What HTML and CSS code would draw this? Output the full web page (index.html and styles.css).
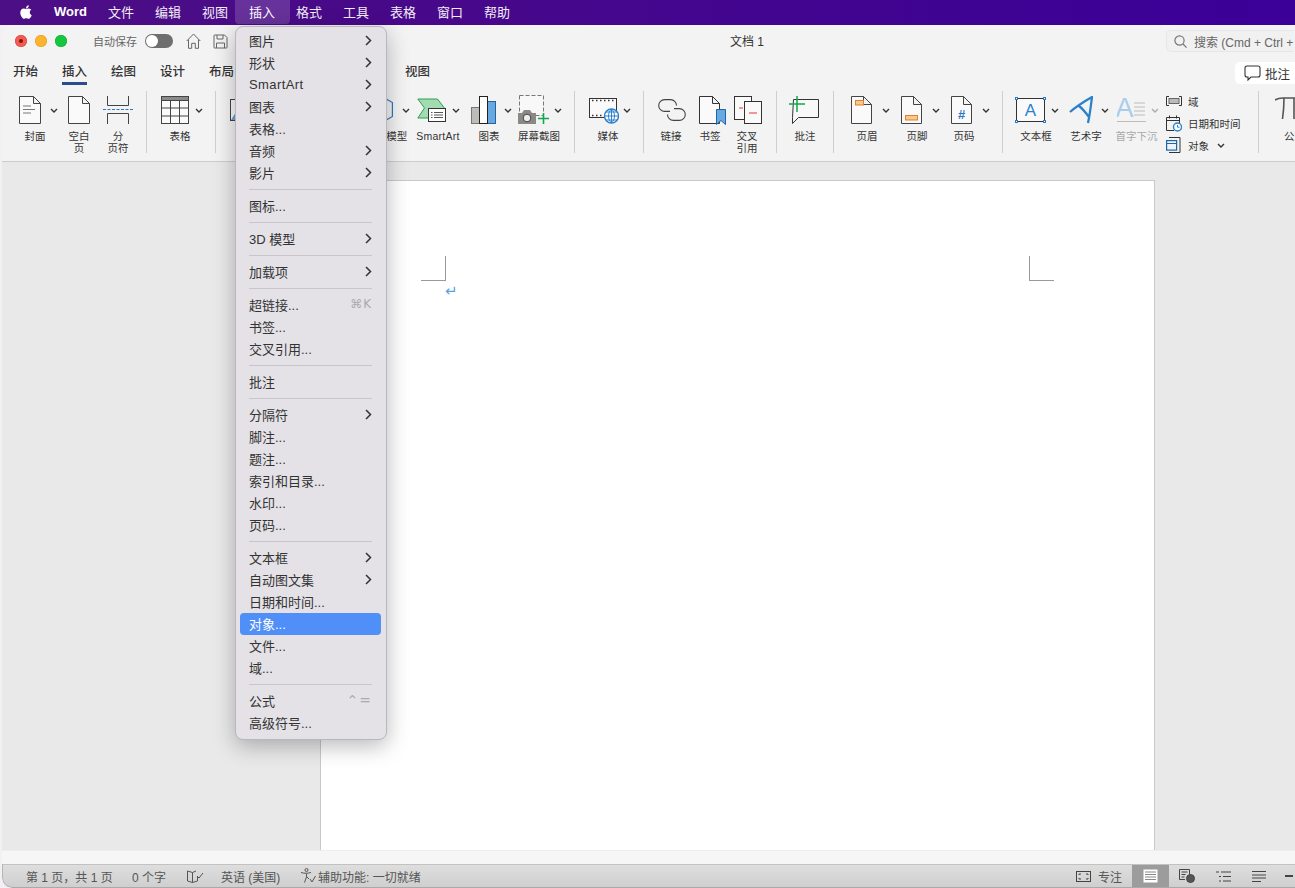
FILE: index.html
```html
<!DOCTYPE html>
<html lang="zh-CN">
<head>
<meta charset="utf-8">
<title>Word</title>
<link rel="stylesheet" href="styles.css">
</head>
<body>
<header class="menubar">
  <svg class="apple" width="18" height="18" viewBox="0 0 24 24"><path fill="#fff" d="M17.05 20.28c-.98.95-2.05.8-3.08.35-1.09-.46-2.09-.48-3.24 0-1.44.62-2.2.44-3.06-.35C2.79 15.25 3.51 7.59 9.05 7.31c1.35.07 2.29.74 3.08.8 1.18-.24 2.31-.93 3.57-.84 1.51.12 2.65.72 3.4 1.8-3.12 1.87-2.38 5.98.48 7.13-.57 1.5-1.31 2.99-2.54 4.09zM12.03 7.25c-.15-2.23 1.66-4.07 3.74-4.25.29 2.58-2.34 4.5-3.74 4.25z"/></svg>
  <span class="mb-app">Word</span>
  <span class="mb-item">文件</span>
  <span class="mb-item">编辑</span>
  <span class="mb-item">视图</span>
  <span class="mb-item mb-active">插入</span>
  <span class="mb-item">格式</span>
  <span class="mb-item">工具</span>
  <span class="mb-item">表格</span>
  <span class="mb-item">窗口</span>
  <span class="mb-item">帮助</span>
</header>

<main class="window">
  <div class="titlebar">
    <span class="light red"><i></i></span><span class="light yellow"></span><span class="light green"></span>
    <span class="autosave">自动保存</span>
    <span class="toggle"><i></i></span>
    <svg class="qa-home" width="15" height="16" viewBox="0 0 15 16" fill="none" stroke="#666" stroke-width="1"><path d="M.7 8 7.5 1l6.8 7M2.5 6.5v8.8h3.2v-5h3.6v5h3.2V6.5"/></svg>
    <svg class="qa-save" width="15" height="15" viewBox="0 0 15 15" fill="none" stroke="#666" stroke-width="1"><path d="M1 1.5a.5.5 0 0 1 .5-.5h10L14 3.5v10a.5.5 0 0 1-.5.5h-12a.5.5 0 0 1-.5-.5zM4 1v4h6V1M3.5 14V9h8v5"/></svg>
    <span class="doc-title">文档 1</span>
    <div class="search">
      <svg width="13" height="13" viewBox="0 0 13 13" fill="none" stroke="#777" stroke-width="1.2"><circle cx="5.5" cy="5.5" r="4.6"/><path d="m9 9 3.6 3.6"/></svg>
      <span>搜索 (Cmd + Ctrl +</span>
    </div>
  </div>

  <nav class="tabs">
    <span class="tab">开始</span>
    <span class="tab tab-active">插入</span>
    <span class="tab">绘图</span>
    <span class="tab">设计</span>
    <span class="tab">布局</span>
    <span class="tab tab-covered">引用</span>
    <span class="tab tab-covered">邮件</span>
    <span class="tab tab-covered">审阅</span>
    <span class="tab">视图</span>
    <button class="comment-btn">
      <svg width="17" height="16" viewBox="0 0 17 16" fill="none" stroke="#333" stroke-width="1.1"><path d="M3 1h11a2 2 0 0 1 2 2v7a2 2 0 0 1-2 2H7l-3 3v-3H3a2 2 0 0 1-2-2V3a2 2 0 0 1 2-2z"/></svg>
      <span>批注</span>
    </button>
  </nav>

  <section class="ribbon">
    <div class="tool t-cover">
      <div class="irow">
        <svg width="22" height="28" viewBox="0 0 22 28" fill="#fafafa" stroke="#444"><path d="M.5.500h14l7 7v20H.5zM14.500.5v7h7"/><path d="M4 10h8M4 13.500h12M4 17h8" stroke="#777" fill="none"/></svg>
        <svg class="chev" width="8" height="5" viewBox="0 0 8 5"><path d="m1 1 3 3 3-3" fill="none" stroke="#333" stroke-width="1.4"/></svg>
      </div>
      <div class="label">封面</div>
    </div>
    <div class="tool t-blank">
      <div class="irow"><svg width="22" height="28" viewBox="0 0 22 28" fill="#fafafa" stroke="#444"><path d="M.5.500h14l7 7v20H.5zM14.500.5v7h7"/></svg></div>
      <div class="label">空白<br>页</div>
    </div>
    <div class="tool t-break">
      <div class="irow"><svg width="30" height="28" viewBox="0 0 30 28" fill="none" stroke="#444"><path d="M4.500 0v9.500h21V0M4.500 28V17.500h21V28"/><path d="M0 13.500h30" stroke="#2a78c2" stroke-dasharray="3 1.500"/></svg></div>
      <div class="label">分<br>页符</div>
    </div>
    <span class="rsep s-a"></span>
    <div class="tool t-table">
      <div class="irow">
        <svg width="28" height="28" viewBox="0 0 28 28" fill="#fafafa" stroke="#444"><rect x=".5" y=".5" width="27" height="27"/><path d="M.5.500h27v4H.5z" fill="#8a8a8a"/><path d="M9.500 4.500v23M18.500 4.500v23M.5 12h27M.5 20h27" fill="none"/></svg>
        <svg class="chev" width="8" height="5" viewBox="0 0 8 5"><path d="m1 1 3 3 3-3" fill="none" stroke="#333" stroke-width="1.4"/></svg>
      </div>
      <div class="label">表格</div>
    </div>
    <span class="rsep s-b"></span>
    <div class="tool t-pic">
      <div class="irow"><svg width="28" height="22" viewBox="0 0 28 22"><rect x=".5" y=".5" width="27" height="21" fill="#fafafa" stroke="#444"/><path d="M1 21 9 8l7 9 4-4 7 8z" fill="#6a9fd4"/></svg></div>
      <div class="label label-covered">图片</div>
    </div>
    <div class="tool t-3d">
      <div class="irow">
        <svg width="20" height="28" viewBox="0 0 20 28" fill="none" stroke="#2a78c2" stroke-width="1.200"><path d="M8 0l11.400 6.500v14L8 27-4 20V6.500z"/></svg>
        <svg class="chev" width="8" height="5" viewBox="0 0 8 5"><path d="m1 1 3 3 3-3" fill="none" stroke="#333" stroke-width="1.4"/></svg>
      </div>
      <div class="label">3D 模型</div>
    </div>
    <div class="tool t-smart">
      <div class="irow">
        <svg width="29" height="26" viewBox="0 0 29 26"><path d="M.8 2h19.700l7.700 10-7.700 9H.8l6.700-10z" fill="#a3dcb0" stroke="#2f9e53"/><rect x="11.500" y="11.500" width="17" height="13" fill="#fff" stroke="#333"/><path d="M14 15.500h1.500M17 15.500h9M14 18h1.500M17 18h9M14 20.500h1.500M17 20.500h9" stroke="#555" fill="none"/></svg>
        <svg class="chev" width="8" height="5" viewBox="0 0 8 5"><path d="m1 1 3 3 3-3" fill="none" stroke="#333" stroke-width="1.4"/></svg>
      </div>
      <div class="label">SmartArt</div>
    </div>
    <div class="tool t-chart">
      <div class="irow">
        <svg width="25" height="28" viewBox="0 0 25 28"><rect x=".5" y="11.500" width="8" height="16" fill="#bdbcb8" stroke="#777"/><rect x="16.500" y="5.500" width="8" height="22" fill="#6aa9e0" stroke="#1f66a8"/><rect x="8.500" y=".5" width="8" height="27" fill="#fff" stroke="#222"/></svg>
        <svg class="chev" width="8" height="5" viewBox="0 0 8 5"><path d="m1 1 3 3 3-3" fill="none" stroke="#333" stroke-width="1.4"/></svg>
      </div>
      <div class="label">图表</div>
    </div>
    <div class="tool t-shot">
      <div class="irow">
        <svg width="32" height="30" viewBox="0 0 32 30"><rect x="1.500" y=".5" width="24" height="20" fill="#f8f8f8" stroke="#777" stroke-dasharray="4 2"/><path d="M0 18h4l2-3h6l2 3h4v11H0z" fill="#8b8985"/><circle cx="9" cy="23" r="3.800" fill="#eee" stroke="#444"/><path d="M25.500 18v11M20 23.500h11" stroke="#12a84b" stroke-width="1.600"/></svg>
        <svg class="chev" width="8" height="5" viewBox="0 0 8 5"><path d="m1 1 3 3 3-3" fill="none" stroke="#333" stroke-width="1.4"/></svg>
      </div>
      <div class="label">屏幕截图</div>
    </div>
    <span class="rsep s-c"></span>
    <div class="tool t-media">
      <div class="irow">
        <svg width="30" height="28" viewBox="0 0 30 28"><rect x=".5" y="2.500" width="27" height="19" fill="#fafafa" stroke="#333"/><path d="M3 4.500h22M3 19.500h12" stroke="#333" stroke-width="1.600" stroke-dasharray="1.500 2.500" fill="none"/><circle cx="22.500" cy="20" r="7" fill="#fff" stroke="#2a82cc" stroke-width="1.400"/><path d="M15.500 20h14M22.500 13v14M17 16h11M17 24h11M22.500 13c-4 4-4 10 0 14M22.500 13c4 4 4 10 0 14" fill="none" stroke="#2a82cc"/></svg>
        <svg class="chev" width="8" height="5" viewBox="0 0 8 5"><path d="m1 1 3 3 3-3" fill="none" stroke="#333" stroke-width="1.4"/></svg>
      </div>
      <div class="label">媒体</div>
    </div>
    <span class="rsep s-d"></span>
    <div class="tool t-link">
      <div class="irow"><svg width="28" height="22" viewBox="0 0 28 22" fill="none" stroke="#444" stroke-width="1.100"><path d="M12 12.400H6.600a5.900 5.900 0 0 1 0-11.800h6a5.900 5.900 0 0 1 5.900 5.900M16 9.600h5.400a5.900 5.900 0 0 1 0 11.800h-6a5.900 5.900 0 0 1-5.900-5.900"/></svg></div>
      <div class="label">链接</div>
    </div>
    <div class="tool t-mark">
      <div class="irow"><svg width="27" height="29" viewBox="0 0 27 29"><path d="M.5.500h13l7 7v20H.5zM13.500.5v7h7" fill="#fafafa" stroke="#333"/><path d="M17.500 13.500h9v15l-4.500-4-4.500 4z" fill="#6aa9e0" stroke="#1f66a8"/></svg></div>
      <div class="label">书签</div>
    </div>
    <div class="tool t-cross">
      <div class="irow"><svg width="28" height="28" viewBox="0 0 28 28"><rect x=".5" y=".5" width="17" height="23" fill="#fafafa" stroke="#333"/><path d="M5 12h4" stroke="#e33"/><rect x="10.500" y="5.500" width="17" height="22" fill="#fafafa" stroke="#333"/><path d="M15 17h8" stroke="#e33"/></svg></div>
      <div class="label">交叉<br>引用</div>
    </div>
    <span class="rsep s-e"></span>
    <div class="tool t-note">
      <div class="irow"><svg width="30" height="28" viewBox="0 0 30 28"><path d="M4.500 3.500h25v18h-20l-6 6v-6h0z" fill="#f8f8f8" stroke="#333"/><path d="M8 0v16M0 8h16" stroke="#12a84b" stroke-width="1.500"/></svg></div>
      <div class="label">批注</div>
    </div>
    <span class="rsep s-f"></span>
    <div class="tool t-head">
      <div class="irow">
        <svg width="21" height="28" viewBox="0 0 21 28"><path d="M.5.500h12l8 8v19H.5z M12.500.5v8h8" fill="#fafafa" stroke="#444"/><rect x="4.500" y="4.500" width="8" height="4.500" fill="#f7c98a" stroke="#e07f2e"/></svg>
        <svg class="chev" width="8" height="5" viewBox="0 0 8 5"><path d="m1 1 3 3 3-3" fill="none" stroke="#333" stroke-width="1.4"/></svg>
      </div>
      <div class="label">页眉</div>
    </div>
    <div class="tool t-foot">
      <div class="irow">
        <svg width="21" height="28" viewBox="0 0 21 28"><path d="M.5.500h12l8 8v19H.5z M12.500.5v8h8" fill="#fafafa" stroke="#444"/><rect x="4.500" y="19.500" width="12" height="4.500" fill="#f7c98a" stroke="#e07f2e"/></svg>
        <svg class="chev" width="8" height="5" viewBox="0 0 8 5"><path d="m1 1 3 3 3-3" fill="none" stroke="#333" stroke-width="1.4"/></svg>
      </div>
      <div class="label">页脚</div>
    </div>
    <div class="tool t-num">
      <div class="irow">
        <svg width="21" height="28" viewBox="0 0 21 28"><path d="M.5.500h12l8 8v19H.5z M12.500.5v8h8" fill="#fafafa" stroke="#444"/><text x="10.500" y="23" text-anchor="middle" class="svg-hash">#</text></svg>
        <svg class="chev" width="8" height="5" viewBox="0 0 8 5"><path d="m1 1 3 3 3-3" fill="none" stroke="#333" stroke-width="1.4"/></svg>
      </div>
      <div class="label">页码</div>
    </div>
    <span class="rsep s-g"></span>
    <div class="tool t-box">
      <div class="irow">
        <svg width="31" height="26" viewBox="0 0 31 26"><rect x="1.500" y="1.500" width="28" height="23" fill="#fafafa" stroke="#333"/><text x="15.500" y="19" text-anchor="middle" class="svg-a">A</text><g fill="#fff" stroke="#2a78c2"><rect x=".5" y=".5" width="2" height="2"/><rect x="28.500" y=".5" width="2" height="2"/><rect x=".5" y="23.500" width="2" height="2"/><rect x="28.500" y="23.500" width="2" height="2"/></g></svg>
        <svg class="chev" width="8" height="5" viewBox="0 0 8 5"><path d="m1 1 3 3 3-3" fill="none" stroke="#333" stroke-width="1.4"/></svg>
      </div>
      <div class="label">文本框</div>
    </div>
    <div class="tool t-art">
      <div class="irow">
        <svg width="24" height="28" viewBox="0 0 24 28" fill="none" stroke="#2a82cc" stroke-width="2.300"><path d="M1 16C9 9 16 5 23 1c-1 8-2 17-4 26M10 10c4 3 7 7 10 11"/></svg>
        <svg class="chev" width="8" height="5" viewBox="0 0 8 5"><path d="m1 1 3 3 3-3" fill="none" stroke="#333" stroke-width="1.4"/></svg>
      </div>
      <div class="label">艺术字</div>
    </div>
    <div class="tool t-drop">
      <div class="irow">
        <svg width="29" height="26" viewBox="0 0 29 26"><text x="7.500" y="20" text-anchor="middle" class="svg-drop">A</text><path d="M17 6h11M17 10h11M17 14h11M17 18h11M0 24.500h29" stroke="#bbb" fill="none"/></svg>
        <svg class="chev" width="8" height="5" viewBox="0 0 8 5"><path d="m1 1 3 3 3-3" fill="none" stroke="#aaa" stroke-width="1.4"/></svg>
      </div>
      <div class="label label-off">首字下沉</div>
    </div>
    <div class="stack">
      <div class="srow"><svg width="16" height="10" viewBox="0 0 16 10"><path d="M3 .5H.5v9H3M13 .5h2.500v9H13" fill="none" stroke="#333"/><rect x="3" y="2.500" width="10" height="5" fill="#bbb" stroke="#666"/></svg><span>域</span></div>
      <div class="srow"><svg width="16" height="17" viewBox="0 0 16 17"><path d="M.5 2.500h13v7M8 15.500H.5v-13M.5 5.500h13M3.500.5v3M10.500.5v3" fill="none" stroke="#333"/><circle cx="11.500" cy="12" r="4" fill="#fff" stroke="#2a82cc" stroke-width="1.400"/><path d="M11.500 10v2.200h2" fill="none" stroke="#2a82cc"/></svg><span>日期和时间</span></div>
      <div class="srow"><svg width="16" height="16" viewBox="0 0 16 16"><path d="M3 .5h11v15H3" fill="none" stroke="#333"/><rect x=".6" y="3.600" width="10" height="9.500" fill="#eef4fb" stroke="#1f66a8" stroke-width="1.200"/><path d="M1 6.500h9" stroke="#1f66a8"/></svg><span>对象</span><svg class="chev-s" width="8" height="5" viewBox="0 0 8 5"><path d="m1 1 3 3 3-3" fill="none" stroke="#333" stroke-width="1.4"/></svg></div>
    </div>
    <span class="rsep s-h"></span>
    <div class="tool t-eq">
      <div class="irow"><svg width="30" height="28" viewBox="0 0 30 28" fill="none" stroke="#555" stroke-width="1.600"><path d="M0 4c3-2 5-2 8-2h22M9 2c0 8-.5 14-1.500 21M19 2v21"/></svg></div>
      <div class="label">公式</div>
    </div>
  </section>

  <section class="canvas">
    <div class="page">
      <div class="marks"><span class="mark mark-l"></span><span class="mark mark-r"></span></div>
      <div class="para">↵</div>
    </div>
  </section>
  <div class="hscroll"></div>

  <footer class="status">
    <span class="st-pages">第 1 页，共 1 页</span>
    <span class="st-words">0 个字</span>
    <svg class="st-proof" width="17" height="13" viewBox="0 0 17 13" fill="none" stroke="#555"><path d="M5.500 2.500 .5 1v10l5 1.500 5-1.500V6M5.500 2.500v10M5.500 2.500 9 1M10 6l2 2 4-5"/></svg>
    <span class="st-lang">英语 (美国)</span>
    <svg class="st-acc" width="16" height="16" viewBox="0 0 16 16" fill="none" stroke="#555"><circle cx="6.500" cy="2" r="1.500"/><path d="M1 4.500c3 1 7 1 10 0M6.500 6v3l-2 5.500M7 9l2 2M10 11l2 3 3.500-6"/></svg>
    <span class="st-acctext">辅助功能: 一切就绪</span>
    <div class="st-right">
      <svg width="15" height="11" viewBox="0 0 15 11" fill="none" stroke="#444"><rect x=".5" y=".5" width="14" height="10"/><path d="M3 4V3h2M10 3h2v1M3 7v1h2M10 8h2V7"/></svg>
      <span class="st-focus">专注</span>
      <span class="view view-on"><svg width="15" height="14" viewBox="0 0 15 14"><rect x=".5" y=".5" width="14" height="13" fill="#fff"/><path d="M2 3h11M2 5.500h11M2 8h11M2 10.500h11" stroke="#888"/></svg></span>
      <span class="view"><svg width="16" height="14" viewBox="0 0 16 14" fill="none" stroke="#444"><path d="M6 10.500H.5V.5h10v5M2.500 3h6M2.500 5.500h4M2.500 8h3"/><circle cx="11.500" cy="9.500" r="4" fill="#555"/></svg></span>
      <span class="view"><svg width="15" height="11" viewBox="0 0 15 11" fill="none" stroke="#444"><path d="M0 1h3M5 1h10M3 5.500h2M7 5.500h8M3 10h2M7 10h8"/></svg></span>
      <span class="view"><svg width="14" height="11" viewBox="0 0 14 11" fill="none" stroke="#444"><path d="M0 .5h14M0 4h14M0 7h14M0 10.500h9"/></svg></span>
      <span class="zoom-minus"></span>
    </div>
  </footer>
</main>

<div class="menu">
  <div class="mi">图片<svg class="sub" width="7" height="11" viewBox="0 0 7 11"><path d="m1 1 4.500 4.500L1 10" fill="none" stroke="#333" stroke-width="1.500"/></svg></div>
  <div class="mi">形状<svg class="sub" width="7" height="11" viewBox="0 0 7 11"><path d="m1 1 4.500 4.500L1 10" fill="none" stroke="#333" stroke-width="1.500"/></svg></div>
  <div class="mi"><span class="latin">SmartArt</span><svg class="sub" width="7" height="11" viewBox="0 0 7 11"><path d="m1 1 4.500 4.500L1 10" fill="none" stroke="#333" stroke-width="1.500"/></svg></div>
  <div class="mi">图表<svg class="sub" width="7" height="11" viewBox="0 0 7 11"><path d="m1 1 4.500 4.500L1 10" fill="none" stroke="#333" stroke-width="1.500"/></svg></div>
  <div class="mi">表格...</div>
  <div class="mi">音频<svg class="sub" width="7" height="11" viewBox="0 0 7 11"><path d="m1 1 4.500 4.500L1 10" fill="none" stroke="#333" stroke-width="1.500"/></svg></div>
  <div class="mi">影片<svg class="sub" width="7" height="11" viewBox="0 0 7 11"><path d="m1 1 4.500 4.500L1 10" fill="none" stroke="#333" stroke-width="1.500"/></svg></div>
  <div class="msep"></div>
  <div class="mi">图标...</div>
  <div class="msep"></div>
  <div class="mi">3D 模型<svg class="sub" width="7" height="11" viewBox="0 0 7 11"><path d="m1 1 4.500 4.500L1 10" fill="none" stroke="#333" stroke-width="1.500"/></svg></div>
  <div class="msep"></div>
  <div class="mi">加载项<svg class="sub" width="7" height="11" viewBox="0 0 7 11"><path d="m1 1 4.500 4.500L1 10" fill="none" stroke="#333" stroke-width="1.500"/></svg></div>
  <div class="msep"></div>
  <div class="mi">超链接...<span class="key">⌘K</span></div>
  <div class="mi">书签...</div>
  <div class="mi">交叉引用...</div>
  <div class="msep"></div>
  <div class="mi">批注</div>
  <div class="msep"></div>
  <div class="mi">分隔符<svg class="sub" width="7" height="11" viewBox="0 0 7 11"><path d="m1 1 4.500 4.500L1 10" fill="none" stroke="#333" stroke-width="1.500"/></svg></div>
  <div class="mi">脚注...</div>
  <div class="mi">题注...</div>
  <div class="mi">索引和目录...</div>
  <div class="mi">水印...</div>
  <div class="mi">页码...</div>
  <div class="msep"></div>
  <div class="mi">文本框<svg class="sub" width="7" height="11" viewBox="0 0 7 11"><path d="m1 1 4.500 4.500L1 10" fill="none" stroke="#333" stroke-width="1.500"/></svg></div>
  <div class="mi">自动图文集<svg class="sub" width="7" height="11" viewBox="0 0 7 11"><path d="m1 1 4.500 4.500L1 10" fill="none" stroke="#333" stroke-width="1.500"/></svg></div>
  <div class="mi">日期和时间...</div>
  <div class="mi mi-on">对象...</div>
  <div class="mi">文件...</div>
  <div class="mi">域...</div>
  <div class="msep"></div>
  <div class="mi">公式<span class="key key-eq">⌃=</span></div>
  <div class="mi">高级符号...</div>
</div>
</body>
</html>
```

FILE: styles.css
```css
* { box-sizing: border-box; }
html, body { margin: 0; padding: 0; }
body {
  width: 1295px;
  height: 888px;
  overflow: hidden;
  position: relative;
  display: flex;
  flex-direction: column;
  background: #f2f0f4;
  color: #333;
  font-family: "Liberation Sans", "Noto Sans CJK SC", sans-serif;
}

/* menu bar */
.menubar {
  flex: none;
  height: 25px;
  display: flex;
  align-items: center;
  padding-bottom: 3px;
  background: linear-gradient(90deg, #4d0f85 0%, #47088a 35%, #3a0098 100%);
  color: #fff;
  font-size: 13px;
}
.apple { margin-left: 17px; margin-top: 1px; flex: none; }
.mb-app { margin-left: 19px; width: 33px; font-weight: 700; }
.mb-item { margin-left: 21px; width: 26px; white-space: nowrap; opacity: .93; }
.mb-active {
  position: relative;
  opacity: 1;
}
.mb-active::before {
  content: "";
  position: absolute;
  left: -14px;
  right: -15px;
  top: -2px;
  height: 24px;
  background: rgba(255, 255, 255, .16);
  border-radius: 0 0 4px 4px;
}

/* window */
.window {
  flex: 1;
  min-height: 0;
  margin-left: 2px;
  width: 1293px;
  display: flex;
  flex-direction: column;
  background: #f3f3f3;
  border-radius: 10px 0 0 10px;
  overflow: hidden;
}
.titlebar {
  flex: none;
  height: 32px;
  display: flex;
  align-items: center;
  padding-left: 13px;
}
.light {
  width: 12px;
  height: 12px;
  border-radius: 50%;
  margin-right: 8px;
  flex: none;
  display: flex;
  align-items: center;
  justify-content: center;
}
.red { background: #f25a52; box-shadow: inset 0 0 0 .5px #d8423a; }
.red i { width: 4px; height: 4px; border-radius: 50%; background: #7a1512; }
.yellow { background: #fbb42f; box-shadow: inset 0 0 0 .5px #dd9a22; }
.green { background: #15c63f; box-shadow: inset 0 0 0 .5px #10a934; margin-right: 0; }
.autosave { margin-left: 26px; font-size: 11px; color: #666; width: 45px; white-space: nowrap; flex: none; }
.toggle {
  margin-left: 7px;
  width: 28px;
  height: 14px;
  border-radius: 7px;
  background: #6e6e6e;
  display: flex;
  flex: none;
  align-items: center;
  padding-left: 1px;
}
.toggle i { width: 12px; height: 12px; border-radius: 50%; background: #fff; display: block; }
.qa-home { margin-left: 13px; flex: none; }
.qa-save { margin-left: 12px; flex: none; }
.doc-title { margin-left: 502px; margin-top: -2px; width: 33px; font-size: 12px; color: #333; white-space: nowrap; flex: none; }
.search {
  margin-left: 403px;
  width: 128px;
  height: 22px;
  flex: none;
  display: flex;
  align-items: center;
  gap: 7px;
  padding-left: 7px;
  border: 1px solid #e6e6e6;
  border-right: 0;
  border-radius: 5px 0 0 5px;
  background: #f1f1f1;
  font-size: 12px;
  color: #666;
  white-space: nowrap;
}
.search svg { flex: none; }

/* tabs */
.tabs {
  flex: none;
  height: 33px;
  display: flex;
  align-items: flex-start;
  padding-left: 11px;
  gap: 24px;
}
.tab {
  width: 25px;
  height: 28px;
  padding-top: 7px;
  font-size: 12.500px;
  line-height: 16px;
  white-space: nowrap;
  color: #333;
  font-weight: 500;
  border-bottom: 3px solid transparent;
  flex: none;
}
.tab-active { border-bottom-color: #2b4d8f; }
.tab-covered, .label-covered { visibility: hidden; }
.comment-btn {
  margin-left: auto;
  margin-top: 5px;
  margin-right: -6px;
  width: 66px;
  height: 22px;
  flex: none;
  display: flex;
  align-items: center;
  gap: 4px;
  padding: 0 0 0 9px;
  background: #fff;
  border: 0;
  border-radius: 5px;
  font: 12.500px "Liberation Sans", "Noto Sans CJK SC", sans-serif;
  color: #333;
}
.comment-btn svg { flex: none; }

/* ribbon */
.ribbon {
  flex: none;
  height: 72px;
  display: flex;
  align-items: flex-start;
  padding-top: 4px;
  border-bottom: 1px solid #cdcdcd;
  white-space: nowrap;
  overflow: hidden;
}
.tool { flex: none; }
.irow { height: 32px; display: flex; align-items: center; }
.irow svg { flex: none; }
.label {
  margin-top: 4px;
  font-size: 10.500px;
  line-height: 12px;
  text-align: center;
  color: #333;
}
.label-off { color: #a9a9a9; }
.rsep {
  flex: none;
  width: 1px;
  height: 62px;
  margin-top: -3px;
  background: #cfcfcf;
}
.t-cover { width: 45px; margin-left: 11px; }
.t-cover .irow { padding-left: 6px; }
.t-cover .chev { margin-left: 9px; }
.t-cover .label { padding-right: 1px; }
.t-blank { width: 34px; margin-left: 4px; }
.t-blank .irow { padding-left: 6px; }
.t-break { width: 40px; margin-left: 2px; }
.t-break .irow { padding-left: 5px; }
.s-a { margin-left: 8px; }
.t-table { width: 46px; margin-left: 10px; }
.t-table .irow { padding-left: 4px; }
.t-table .chev { margin-left: 6px; }
.s-b { margin-left: 12px; }
.t-pic { width: 40px; margin-left: 9px; }
.t-pic .irow { padding-left: 5px; }
.t-3d { width: 39px; margin-left: 108px; }
.t-3d .chev { margin-left: 9px; }
.t-3d .label { margin-left: -3px; text-align: left; white-space: nowrap; }
.t-smart { width: 46px; margin-left: 3px; }
.t-smart .irow { padding-left: 2px; }
.t-smart .chev { margin-left: 6px; }
.t-smart .label { letter-spacing: .25px; }
.t-chart { width: 47px; margin-left: 5px; }
.t-chart .irow { padding-left: 5px; }
.t-chart .chev { margin-left: 8px; }
.t-chart .label { padding-right: 1px; }
.t-shot { width: 47px; margin-left: 3px; }
.t-shot .irow { padding-left: 2px; }
.t-shot .chev { margin-left: 4px; }
.t-shot .label { padding-right: 1px; }
.s-c { margin-left: 11px; }
.t-media { width: 44px; margin-left: 13px; }
.t-media .irow { padding-left: 1px; }
.t-media .chev { margin-left: 4px; }
.t-media .label { padding-right: 4px; }
.s-d { margin-left: 11px; }
.t-link { width: 34px; margin-left: 10px; }
.t-link .irow { padding-left: 4px; }
.t-mark { width: 36px; margin-left: 4px; }
.t-mark .irow { padding-left: 7px; }
.t-cross { width: 30px; margin-left: 4px; }
.t-cross .irow { padding-left: 2px; }
.s-e { margin-left: 14px; }
.t-note { width: 34px; margin-left: 11px; }
.t-note .irow { padding-left: 1px; }
.s-f { margin-left: 11px; }
.t-head, .t-foot, .t-num { width: 46px; margin-left: 4px; }
.t-head { margin-left: 10px; }
.t-head .irow, .t-foot .irow, .t-num .irow { padding-left: 7px; }
.t-head .chev, .t-foot .chev, .t-num .chev { margin-left: 10px; }
.t-num .label { padding-right: 6px; }
.s-g { margin-left: 12px; }
.t-box { width: 46px; margin-left: 10px; }
.t-box .irow { padding-left: 2px; }
.t-box .chev { margin-left: 5px; }
.t-art { width: 46px; margin-left: 4px; }
.t-art .irow { padding-left: 6px; }
.t-art .chev { margin-left: 8px; }
.t-drop { width: 45px; margin-left: 5px; }
.t-drop .irow { padding-left: 3px; }
.t-drop .chev { margin-left: 5px; }
.svg-hash { font: 700 13px "Liberation Sans", sans-serif; fill: #2a78c2; }
.svg-a { font: 17px "Liberation Sans", sans-serif; fill: #2a82cc; }
.svg-drop { font: 27px "Liberation Sans", sans-serif; fill: #a9cde9; }
.stack {
  flex: none;
  width: 92px;
  margin-left: 7px;
  margin-top: -4px;
  display: flex;
  flex-direction: column;
}
.srow {
  height: 22px;
  display: flex;
  align-items: center;
  font-size: 10.500px;
  color: #333;
}
.srow svg:first-child { flex: none; margin-right: 6px; }
.chev-s { margin-left: 8px; flex: none; }
.s-h { margin-top: -3px; }
.t-eq { width: 40px; margin-left: 6px; }
.t-eq .irow { padding-left: 10px; }
.t-eq .label { padding-left: 19px; text-align: left; }

/* document */
.canvas {
  flex: 1;
  min-height: 0;
  background: #e9e9e9;
  padding: 18px 0 0 318px;
  overflow: hidden;
}
.page {
  width: 835px;
  height: 670px;
  background: #fff;
  border: 1px solid #c9c9c9;
  border-bottom: 0;
  padding: 75px 100px 0 100px;
}
.marks { display: flex; justify-content: space-between; }
.mark { width: 25px; height: 25px; border-bottom: 1px solid #9a9a9a; }
.mark-l { border-right: 1px solid #9a9a9a; }
.mark-r { border-left: 1px solid #9a9a9a; }
.para {
  margin: 2px 0 0 24px;
  font: 15px/17px "DejaVu Sans", sans-serif;
  color: #5aa0ea;
}
.hscroll { flex: none; height: 14px; background: #f6f6f6; border-top: 1px solid #ededed; }

/* status bar */
.status {
  flex: none;
  height: 24px;
  display: flex;
  align-items: center;
  border-top: 1px solid #c2c2c2;
  border-bottom: 1px solid #a9a9a9;
  border-left: 1px solid #b5b5b5;
  border-bottom-left-radius: 10px;
  background: linear-gradient(180deg, #dedede, #cfcfcf);
  font-size: 12px;
  color: #555;
  white-space: nowrap;
}
.st-pages { margin-left: 23px; width: 86px; }
.st-words { margin-left: 20px; width: 35px; }
.st-proof { margin-left: 20px; flex: none; }
.st-lang { margin-left: 17px; width: 60px; }
.st-acc { margin-left: 19px; flex: none; }
.st-acctext { margin-left: 2px; width: 106px; }
.st-right { margin-left: auto; display: flex; align-items: center; align-self: stretch; }
.st-focus { margin-left: 7px; margin-right: 10px; width: 24px; }
.view {
  width: 36px;
  display: flex;
  align-items: center;
  justify-content: center;
  align-self: stretch;
  flex: none;
}
.view-on { width: 37px; background: #9c9c9c; }
.zoom-minus { width: 8px; height: 2px; background: #444; margin: 0 2px 0 8px; flex: none; }

/* overlay menu */
.menu {
  position: absolute;
  left: 235px;
  top: 26px;
  width: 152px;
  height: 714px;
  padding: 3px 5px 5px 4px;
  background: #e4e2e7;
  border: 1px solid #b9b7bc;
  border-radius: 8px;
  box-shadow: 0 6px 22px rgba(0, 0, 0, .28);
  font-size: 13px;
  color: #333;
}
.mi {
  height: 22px;
  padding: 0 9px 2px;
  display: flex;
  align-items: center;
  justify-content: space-between;
  white-space: nowrap;
  border-radius: 4px;
}
.mi-on { background: #4f8ff7; color: #fff; }
.latin { letter-spacing: .4px; }
.sub { flex: none; margin-top: 1px; }
.key { color: #aaa; font-family: "DejaVu Sans", "Liberation Sans", sans-serif; font-size: 12px; letter-spacing: 1px; }
.key-eq { font-size: 14px; }
.msep { height: 1px; margin: 5px 9px; background: #c8c6ca; }
```
